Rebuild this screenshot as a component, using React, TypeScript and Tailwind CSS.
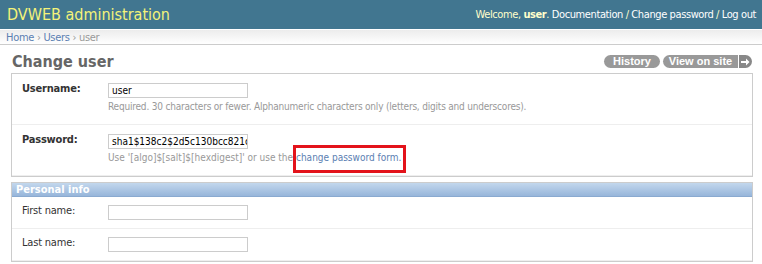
import React from "react";

function Row({
  label,
  bold,
  value,
  help,
  helpClass,
}: {
  label: string;
  bold?: boolean;
  value?: string;
  help?: React.ReactNode;
  helpClass?: string;
}) {
  return (
    <div className={`pl-[10px] ${help ? "pt-[9px] pb-[10px]" : "pt-[8px] pb-[8px]"} border-b border-[#eee]`}>
      <div className="flex items-start">
        <label className={`w-[86px] text-[11px] leading-[11px] tracking-[-0.2px] ${bold ? "font-bold text-[#333]" : "text-[#333]"}`}>
          {label}
        </label>
        <div className="h-[15px] w-[140px] overflow-hidden border border-[#ccc] bg-white pl-[3px] text-[10px] leading-[13px] whitespace-nowrap text-[#000]">
          {value}
        </div>
      </div>
      {help && (
        <p className={`mt-[2px] pl-[86px] text-[10px] leading-[14px] text-[#999] whitespace-nowrap ${helpClass ?? ""}`}>{help}</p>
      )}
    </div>
  );
}

export default function App() {
  return (
    <div className="relative h-[264px] w-[762px] overflow-hidden bg-white font-['DejaVu_Sans_Condensed','DejaVu_Sans',Verdana,sans-serif] text-[11px] text-[#333]">
      {/* Header */}
      <div className="flex h-[29px] items-center justify-between bg-[#417690] pl-[7px] pr-[6px]">
        <h1 className="text-[16px] leading-[18px] font-normal text-[#f4f379]">DVWEB administration</h1>
        <div className="text-[11px] leading-[14px] tracking-[-0.4px] text-[#ffc]">
          Welcome, <strong>user</strong>. <a className="text-white">Documentation</a> /{" "}
          <a className="text-white">Change password</a> / <a className="text-white">Log out</a>
        </div>
      </div>

      {/* Breadcrumbs */}
      <div className="h-[16px] border-t border-b border-t-white border-b-[#ccc] bg-linear-to-b from-[#ececec] to-white pl-[6px] text-[11px] leading-[15px] tracking-[-0.3px] text-[#999]">
        <a className="text-[#5b80b2]">Home</a> <span className="text-[#999]">›</span>{" "}
        <a className="text-[#5b80b2]">Users</a> <span className="text-[#999]">›</span> user
      </div>

      {/* Content */}
      <div className="ml-[11px] mr-[9px] mt-[6px]">
        <div className="flex items-start justify-between">
          <h2 className="pl-[1px] text-[16px] leading-[22px] font-bold text-[#666]">Change user</h2>
          <div className="mr-[1px] mt-[4px] flex items-center gap-[3px] font-['Liberation_Sans',Arial,sans-serif] text-[11px] font-bold text-white">
            <span className="flex h-[13px] w-[56px] items-center justify-center rounded-full bg-[#999] leading-[13px]">
              History
            </span>
            <span className="flex h-[13px]">
              <span className="flex w-[75px] items-center justify-center rounded-l-full bg-[#999] leading-[13px]">
                View on site
              </span>
              <span className="ml-[1px] flex w-[13px] items-center justify-center rounded-r-full bg-[#888]">
                <svg width="9" height="8" viewBox="0 0 9 8">
                  <path d="M0 3h5V0.5L8.5 4 5 7.5V5H0z" fill="white" />
                </svg>
              </span>
            </span>
          </div>
        </div>

        <div className="border border-[#ccc]">
          <Row
            label="Username:"
            bold
            value="user"
            helpClass="tracking-[-0.2px]"
            help="Required. 30 characters or fewer. Alphanumeric characters only (letters, digits and underscores)."
          />
          <Row
            label="Password:"
            bold
            value="sha1$138c2$2d5c130bcc821c"
            help={
              <>
                Use '[algo]$[salt]$[hexdigest]' or use the{" "}
                <a className="text-[#5b80b2]">change password form.</a>
              </>
            }
          />
        </div>

        <div className="mt-[5px] border border-[#ccc]">
          <h3 className="h-[14px] border-b border-[#8aaad0] bg-linear-to-b from-[#c3d7ed] to-[#97b6da] pl-[4px] text-[11px] leading-[13px] font-bold text-white">
            Personal info
          </h3>
          <Row label="First name:" />
          <Row label="Last name:" />
        </div>
      </div>

      {/* Annotation overlay */}
      <div className="pointer-events-none absolute left-[293px] top-[145px] h-[28px] w-[113px] border-[3px] border-[#e3131b]" />
    </div>
  );
}
